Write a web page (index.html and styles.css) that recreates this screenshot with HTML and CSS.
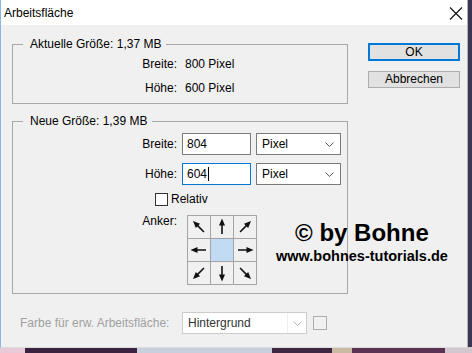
FILE: index.html
```html
<!DOCTYPE html>
<html lang="de">
<head>
    <meta charset="UTF-8">
    <title>Arbeitsfläche</title>
    <link rel="stylesheet" href="styles.css">
</head>
<body>
<div class="window">
    <div class="titlebar">
        <span class="title">Arbeitsfläche</span>
        <svg class="close" width="14" height="13" viewBox="0 0 14 13">
            <path d="M1 0.5 L13 12.5 M13 0.5 L1 12.5" stroke="#111" stroke-width="1.1" fill="none"/>
        </svg>
    </div>

    <div class="dialog">
        <div class="main">
            <div class="group current">
                <div class="legend">Aktuelle Größe: 1,37 MB</div>
                <div class="info">
                    <span class="label">Breite:</span><span>800 Pixel</span>
                    <span class="label">Höhe:</span><span>600 Pixel</span>
                </div>
            </div>

            <div class="group new">
                <div class="legend">Neue Größe: 1,39 MB</div>
                <div class="form">
                    <span class="label">Breite:</span>
                    <div class="controls">
                        <span class="field">804</span>
                        <span class="select">Pixel<svg width="9" height="5" viewBox="0 0 9 5"><path d="M0.5 0.5 L4.5 4.5 L8.5 0.5" stroke="#555" fill="none"/></svg></span>
                    </div>
                    <span class="label">Höhe:</span>
                    <div class="controls">
                        <span class="field focused">604<span class="caret"></span></span>
                        <span class="select">Pixel<svg width="9" height="5" viewBox="0 0 9 5"><path d="M0.5 0.5 L4.5 4.5 L8.5 0.5" stroke="#555" fill="none"/></svg></span>
                    </div>
                </div>
                <div class="check-row">
                    <span class="checkbox"></span>Relativ
                </div>
                <div class="anchor-row">
                    <span class="label">Anker:</span>
                    <div class="anchor">
                        <span class="cell"><svg class="arrow nw" viewBox="0 0 22 22"><use href="#arr"/></svg></span>
                        <span class="cell"><svg class="arrow n" viewBox="0 0 22 22"><use href="#arr"/></svg></span>
                        <span class="cell"><svg class="arrow ne" viewBox="0 0 22 22"><use href="#arr"/></svg></span>
                        <span class="cell"><svg class="arrow w" viewBox="0 0 22 22"><use href="#arr"/></svg></span>
                        <span class="cell active"></span>
                        <span class="cell"><svg class="arrow e" viewBox="0 0 22 22"><use href="#arr"/></svg></span>
                        <span class="cell"><svg class="arrow sw" viewBox="0 0 22 22"><use href="#arr"/></svg></span>
                        <span class="cell"><svg class="arrow s" viewBox="0 0 22 22"><use href="#arr"/></svg></span>
                        <span class="cell"><svg class="arrow se" viewBox="0 0 22 22"><use href="#arr"/></svg></span>
                    </div>
                </div>
            </div>

            <div class="extend">
                <span class="muted">Farbe für erw. Arbeitsfläche:</span>
                <span class="select disabled"><span class="value">Hintergrund</span><span class="drop"><svg width="9" height="5" viewBox="0 0 9 5"><path d="M0.5 0.5 L4.5 4.5 L8.5 0.5" stroke="#bbb" fill="none"/></svg></span></span>
                <span class="swatch"></span>
            </div>
        </div>

        <div class="buttons">
            <button class="btn default">OK</button>
            <button class="btn">Abbrechen</button>
        </div>
    </div>

    <div class="watermark">
        <div class="big">© by Bohne</div>
        <div class="small">www.bohnes-tutorials.de</div>
    </div>
</div>

<!-- Pfeil nach oben, wird per CSS gedreht -->
<svg width="0" height="0" style="position:absolute">
    <defs>
        <g id="arr">
            <path d="M11 18 L11 8" stroke="#111" stroke-width="1.6"/>
            <path d="M8 9.5 L11 2.5 L14 9.5 Z" fill="#111"/>
        </g>
    </defs>
</svg>
</body>
</html>
```

FILE: styles.css
```css
* {
    margin: 0;
    padding: 0;
    box-sizing: border-box;
}

body {
    font-family: "Liberation Sans", Arial, sans-serif;
    font-size: 12px;
    color: #000;
    height: 353px;
    overflow: hidden;
    /* Desktop hinter dem Fenster */
    background:
        linear-gradient(90deg, #e8c9d8 0, #e8c9d8 25px, #3a2340 25px, #3a2340 137px,
            #c9cfdc 137px, #c9cfdc 272px, #402640 272px, #402640 332px,
            #cbb9a3 332px, #cbb9a3 352px, #5a3352 352px, #5a3352 445px,
            #d2c7cf 445px) bottom / 100% 6px no-repeat,
        #3a3550;
}

/* Fenster */
.window {
    position: relative;
    width: 468px;
    height: 348px;
    background: #f0f0f0;
    border-left: 1px solid #8ab6e6;
    border-right: 1px solid #b4b4b4;
    border-bottom: 1px solid #dcdcdc;
}

.titlebar {
    height: 25px;
    background: #fff;
    display: flex;
    align-items: center;
    padding-left: 3px;
}

.title {
    font-size: 12px;
    padding-top: 1px;
}

.close {
    margin-left: auto;
    margin-right: 4px;
    margin-top: 1px;
}

.dialog {
    display: flex;
    align-items: flex-start;
    padding: 19px 0 0 11px;
}

.main {
    width: 336px;
}

/* Gruppenrahmen */
.group {
    border: 1px solid #a8a8a8;
}

.group.new {
    margin-top: 17px;
}

.legend {
    width: fit-content;
    margin: -8px 0 0 10px;
    padding: 0 5px 0 7px;
    line-height: 14px;
    background: #f0f0f0;
}

.label {
    text-align: right;
}

.info {
    display: grid;
    grid-template-columns: 164px auto;
    column-gap: 8px;
    row-gap: 8px;
    line-height: 16px;
    margin-top: 5px;
    padding-bottom: 7px;
}

.form {
    display: grid;
    grid-template-columns: 164px auto;
    column-gap: 5px;
    row-gap: 8px;
    align-items: center;
    margin-top: 5px;
}

.controls {
    display: flex;
    gap: 5px;
}

.field {
    display: flex;
    align-items: center;
    width: 69px;
    height: 22px;
    padding-left: 4px;
    background: #fff;
    border: 1px solid #7a7a7a;
}

.field.focused {
    border-color: #0078d7;
}

.caret {
    width: 1px;
    height: 14px;
    background: #000;
    margin-left: 1px;
}

.select {
    display: flex;
    align-items: center;
    justify-content: space-between;
    width: 85px;
    height: 22px;
    padding: 0 6px 0 5px;
    background: #fff;
    border: 1px solid #7a7a7a;
}

.check-row {
    display: flex;
    align-items: center;
    height: 16px;
    margin-top: 6px;
    padding-left: 142px;
}

.checkbox {
    width: 13px;
    height: 13px;
    border: 1px solid #333;
    background: #fff;
    margin-right: 3px;
}

.anchor-row {
    display: grid;
    grid-template-columns: 164px auto;
    column-gap: 10px;
    align-items: start;
    margin-top: 8px;
    padding-bottom: 8px;
}

.anchor-row .label {
    line-height: 14px;
    margin-top: -1px;
}

/* Ankerraster 3x3 */
.anchor {
    display: grid;
    grid-template-columns: repeat(3, 22px);
    grid-auto-rows: 22px;
    gap: 1px;
    width: 70px;
    padding: 1px;
    background: #a4a4a4;
}

.cell {
    background: #f0f0f0;
}

.cell.active {
    background: #c2dbf5;
}

.arrow {
    display: block;
    width: 22px;
    height: 22px;
}

.arrow.n { transform: rotate(0deg); }
.arrow.ne { transform: rotate(45deg); }
.arrow.e { transform: rotate(90deg); }
.arrow.se { transform: rotate(135deg); }
.arrow.s { transform: rotate(180deg); }
.arrow.sw { transform: rotate(225deg); }
.arrow.w { transform: rotate(270deg); }
.arrow.nw { transform: rotate(315deg); }

/* untere Zeile, deaktiviert */
.extend {
    display: flex;
    align-items: center;
    margin-top: 18px;
    padding-left: 8px;
}

.muted {
    width: 162px;
    color: #a0a0a0;
}

.select.disabled {
    width: 125px;
    padding: 0;
    border-color: #cccccc;
    color: #333;
}

.select.disabled .value {
    padding-left: 5px;
}

.select.disabled .drop {
    display: flex;
    align-items: center;
    justify-content: center;
    width: 19px;
    height: 100%;
    border-left: 1px solid #eeeeee;
}

.swatch {
    width: 14px;
    height: 14px;
    margin: -1px 0 0 6px;
    border: 1px solid #adadad;
}

/* Schaltflächen rechts */
.buttons {
    display: flex;
    flex-direction: column;
    gap: 10px;
    margin: -1px 0 0 20px;
}

.btn {
    width: 92px;
    height: 17px;
    font-family: inherit;
    font-size: 12px;
    line-height: 15px;
    background: #e1e1e1;
    border: 1px solid #adadad;
    color: #000;
}

.btn.default {
    height: 18px;
    border: 2px solid #0078d7;
    line-height: 14px;
}

/* Wasserzeichen */
.watermark {
    position: absolute;
    top: 220px;
    left: 275px;
    font-weight: bold;
    text-align: center;
    color: #000;
}

.watermark .big {
    font-size: 24px;
    line-height: 25px;
}

.watermark .small {
    font-size: 14.5px;
    line-height: 18px;
    margin-top: 2px;
}
```
